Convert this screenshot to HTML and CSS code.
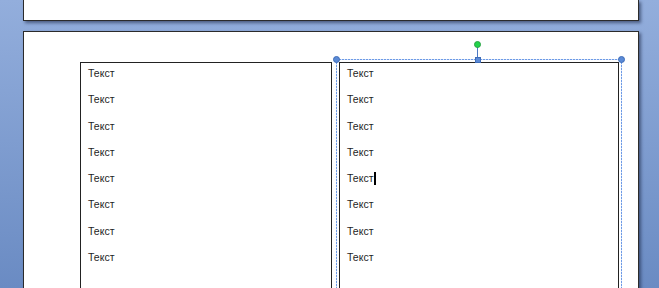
FILE: index.html
```html
<!DOCTYPE html>
<html lang="ru">
<head>
    <meta charset="UTF-8">
    <title>Документ</title>
    <link rel="stylesheet" href="styles.css">
</head>
<body>
    <div class="page page-prev"></div>
    <div class="page page-current">
        <div class="boxes">
            <div class="textbox textbox-left">
                <p>Текст</p>
                <p>Текст</p>
                <p>Текст</p>
                <p>Текст</p>
                <p>Текст</p>
                <p>Текст</p>
                <p>Текст</p>
                <p>Текст</p>
            </div>
            <div class="textbox textbox-right">
                <div class="selection">
                    <span class="handle corner tl"></span>
                    <span class="handle corner tr"></span>
                    <span class="handle square"></span>
                    <span class="stem"></span>
                    <span class="handle rotate"></span>
                </div>
                <p>Текст</p>
                <p>Текст</p>
                <p>Текст</p>
                <p>Текст</p>
                <p>Текст<span class="caret"></span></p>
                <p>Текст</p>
                <p>Текст</p>
                <p>Текст</p>
            </div>
        </div>
    </div>
</body>
</html>
```

FILE: styles.css
```css
html, body {
    height: 100%;
}
body {
    margin: 0;
    padding-left: 23px;
    overflow: hidden;
    background: linear-gradient(#93aedc, #6a8bc3);
    font-family: "Liberation Sans", Arial, sans-serif;
}
.page {
    width: 614px;
    background-color: #fff;
    border: 1px solid #2b2b2b;
    box-shadow: 2px 2px 3px rgba(20, 30, 60, 0.55);
}
.page-prev {
    height: 20px;
    border-top: none;
}
.page-current {
    margin-top: 10px;
    height: 256px;
    border-bottom: none;
    overflow: hidden;
}
.boxes {
    display: flex;
    gap: 7px;
    padding: 30px 0 0 56px;
}
.textbox {
    position: relative;
    height: 240px;
    border: 1px solid #222;
    padding: 3px 7px 0;
}
.textbox-left {
    width: 236px;
}
.textbox-right {
    width: 264px;
}
.textbox p {
    margin: 0 0 12.3px;
    height: 14px;
    line-height: 14px;
    font-size: 10.5px;
    color: #1e1e1e;
}
.caret {
    display: inline-block;
    width: 2px;
    height: 13px;
    margin-left: 1px;
    vertical-align: -3px;
    background-color: #000;
}
.selection {
    position: absolute;
    left: -4px;
    right: -4px;
    top: -4px;
    bottom: -40px;
    background:
        repeating-linear-gradient(90deg, #6d9ae6 0 2px, #d6e3f8 2px 3px) top / 100% 1px no-repeat,
        repeating-linear-gradient(180deg, #6d9ae6 0 2px, #d6e3f8 2px 3px) left / 1px 100% no-repeat,
        repeating-linear-gradient(180deg, #6d9ae6 0 2px, #d6e3f8 2px 3px) right / 1px 100% no-repeat;
}
.handle {
    position: absolute;
    box-sizing: border-box;
}
.corner {
    width: 7px;
    height: 7px;
    top: -3px;
    border-radius: 50%;
    background-color: #5b8ad6;
    border: 1px solid #3f6db8;
}
.tl {
    left: -3px;
}
.tr {
    right: -3px;
}
.square {
    width: 6px;
    height: 6px;
    top: -2px;
    left: 139px;
    background-color: #5b8ad6;
    border: 1px solid #3f6db8;
}
.stem {
    position: absolute;
    left: 141px;
    top: -12px;
    width: 1px;
    height: 10px;
    background-color: #4a78c4;
}
.rotate {
    width: 7px;
    height: 7px;
    top: -18px;
    left: 138px;
    border-radius: 50%;
    background-color: #22d34a;
    border: 1px solid #2aa145;
}
```
